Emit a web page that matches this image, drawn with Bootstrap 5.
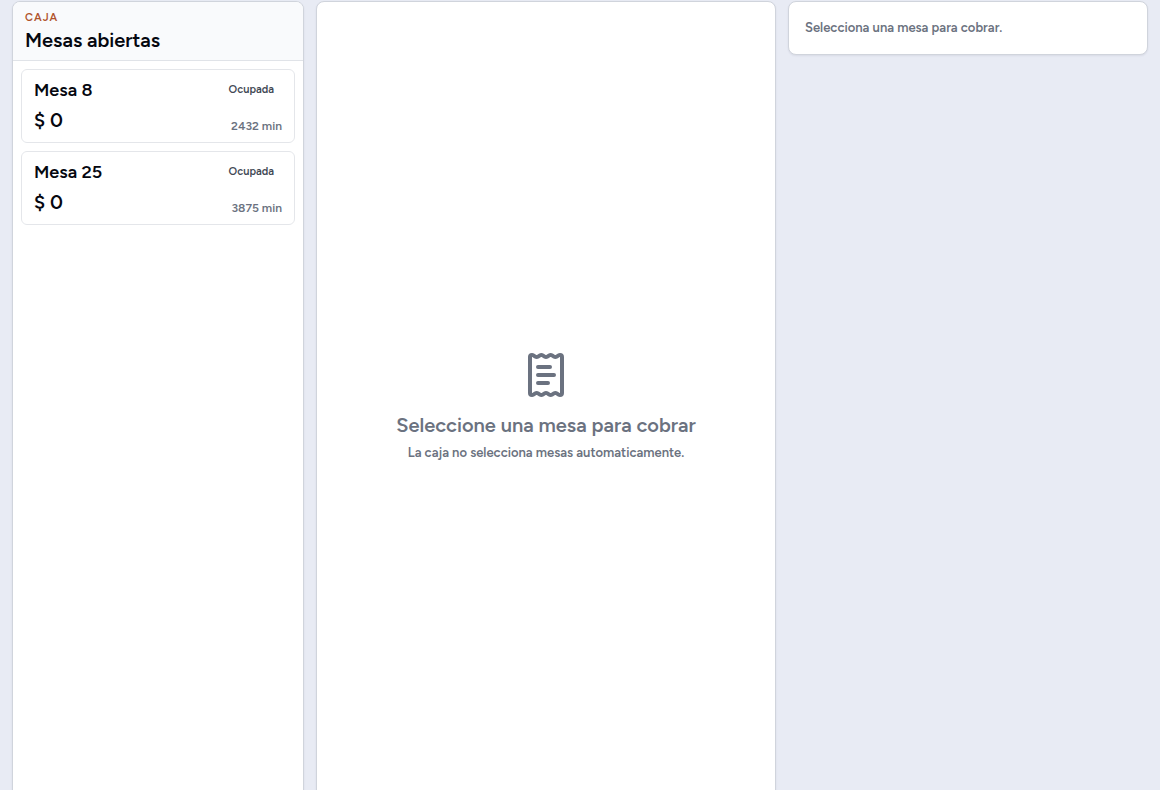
<!DOCTYPE html>
<html lang="es">
<head>
<meta charset="utf-8">
<meta name="viewport" content="width=device-width, initial-scale=1">
<title>Caja</title>
<link href="https://cdn.jsdelivr.net/npm/bootstrap@5.3.0/dist/css/bootstrap.min.css" rel="stylesheet">
<style>
  body { background: #e8ebf4; color: #05070f; font-family: Figtree, Inter, sans-serif; font-weight: 600; }
  .pos-grid { display: grid; grid-template-columns: 292px minmax(0, 1fr) 360px; gap: 12px; padding: 1px 12px 0; align-items: start; }
  .panel { background: #fff; border: 1px solid #d0d4dc; border-radius: 8px; box-shadow: 0 1px 2px rgba(20, 30, 60, .08); overflow: hidden; }
  .panel-tall { min-height: calc(100vh + 22px); }
  .panel-head { background: #f9fafc; border-bottom: 1px solid #e0e3e8; padding: 8px 12px 6px; }
  .eyebrow { font-size: 11px; line-height: 16px; letter-spacing: 1px; color: #b0532b; }
  .panel-title { font-size: 20px; line-height: 28px; font-weight: 600; }
  .mesa { background: #fff; border: 1px solid #e4e6ea; border-radius: 6px; padding: 8px 12px; color: inherit; font-weight: 600; min-height: 74px; }
  .mesa-name { font-size: 18px; line-height: 24px; }
  .mesa-total { font-size: 20px; line-height: 28px; }
  .mesa-state { font-size: 11px; line-height: 16px; color: #414854; padding: 0 8px; }
  .mesa-time { font-size: 12px; line-height: 16px; }
  .soft { color: #6b7280; }
  .empty-title { font-size: 20px; line-height: 28px; font-weight: 600; }
  .note { font-size: 13px; line-height: 20px; }
</style>
</head>
<body class="vh-100 overflow-hidden">
<main class="pos-grid">
  <section class="panel panel-tall">
    <header class="panel-head">
      <div class="eyebrow">CAJA</div>
      <h1 class="panel-title mb-0">Mesas abiertas</h1>
    </header>
    <div class="d-flex flex-column gap-2 p-2">
      <button type="button" class="mesa w-100 text-start d-flex flex-column justify-content-between">
        <span class="w-100 d-flex justify-content-between align-items-center"><span class="mesa-name">Mesa 8</span><span class="mesa-state">Ocupada</span></span>
        <span class="w-100 d-flex justify-content-between align-items-end"><span class="mesa-total">$ 0</span><span class="mesa-time soft">2432 min</span></span>
      </button>
      <button type="button" class="mesa w-100 text-start d-flex flex-column justify-content-between">
        <span class="w-100 d-flex justify-content-between align-items-center"><span class="mesa-name">Mesa 25</span><span class="mesa-state">Ocupada</span></span>
        <span class="w-100 d-flex justify-content-between align-items-end"><span class="mesa-total">$ 0</span><span class="mesa-time soft">3875 min</span></span>
      </button>
    </div>
  </section>
  <section class="panel panel-tall soft d-flex flex-column align-items-center justify-content-center text-center">
    <svg width="48" height="48" viewBox="0 0 24 24" fill="none" stroke="currentColor" stroke-width="2" stroke-linecap="round" stroke-linejoin="round" aria-hidden="true">
      <path d="M4 3a1 1 0 0 1 1-1 1.3 1.3 0 0 1 .7.2l.933.6a1.3 1.3 0 0 0 1.4 0l.934-.6a1.3 1.3 0 0 1 1.4 0l.933.6a1.3 1.3 0 0 0 1.4 0l.933-.6a1.3 1.3 0 0 1 1.4 0l.934.6a1.3 1.3 0 0 0 1.4 0l.933-.6A1.3 1.3 0 0 1 19 2a1 1 0 0 1 1 1v18a1 1 0 0 1-1 1 1.3 1.3 0 0 1-.7-.2l-.933-.6a1.3 1.3 0 0 0-1.4 0l-.934.6a1.3 1.3 0 0 1-1.4 0l-.933-.6a1.3 1.3 0 0 0-1.4 0l-.933.6a1.3 1.3 0 0 1-1.4 0l-.934-.6a1.3 1.3 0 0 0-1.4 0l-.933.6a1.3 1.3 0 0 1-.7.2 1 1 0 0 1-1-1z"/>
      <path d="M14 8H8M16 12H8M13 16H8"/>
    </svg>
    <h2 class="empty-title mt-2 pt-1 mb-0">Seleccione una mesa para cobrar</h2>
    <p class="note mb-0 mt-1">La caja no selecciona mesas automaticamente.</p>
  </section>
  <aside class="panel p-3">
    <p class="note soft mb-0">Selecciona una mesa para cobrar.</p>
  </aside>
</main>
<script src="https://cdn.jsdelivr.net/npm/bootstrap@5.3.0/dist/js/bootstrap.bundle.min.js"></script>
</body>
</html>
